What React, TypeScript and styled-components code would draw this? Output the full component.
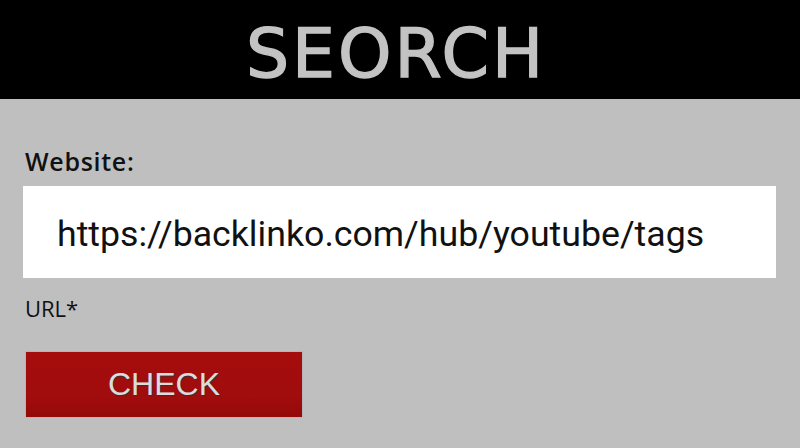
import React from "react";
import styled, { createGlobalStyle } from "styled-components";

const GlobalStyle = createGlobalStyle`
  html, body {
    margin: 0;
    padding: 0;
    background: #bfbfbf;
  }
`;

const Page = styled.div`
  width: 800px;
  height: 448px;
  overflow: hidden;
  background: #bfbfbf;
  display: flex;
  flex-direction: column;
`;

const Header = styled.header`
  height: 99px;
  box-sizing: border-box;
  padding-top: 9px;
  padding-right: 8px;
  background: #000;
  display: flex;
  align-items: center;
  justify-content: center;
`;

const Title = styled.h1`
  margin: 0;
  font-family: "DejaVu Sans", sans-serif;
  font-weight: normal;
  font-size: 68px;
  letter-spacing: 3px;
  color: #c3c3c3;
  -webkit-text-stroke: 1.4px #c3c3c3;
  line-height: 1;
`;

const Form = styled.div`
  display: flex;
  flex-direction: column;
  padding: 47px 24px 0 23px;
`;

const Label = styled.label`
  font-family: "Open Sans", sans-serif;
  font-weight: 600;
  font-size: 25px;
  letter-spacing: 0.7px;
  color: #111;
  padding-left: 2px;
  line-height: 30px;
`;

const Input = styled.div`
  margin-top: 10px;
  height: 92px;
  box-sizing: border-box;
  padding-top: 4px;
  background: #fff;
  display: flex;
  align-items: center;
  padding-left: 34px;
  font-family: Roboto, sans-serif;
  font-size: 35.7px;
  color: #111;
`;

const Hint = styled.div`
  margin-top: 15px;
  padding-left: 2px;
  font-family: "Open Sans", sans-serif;
  font-size: 22px;
  color: #111;
  line-height: 30px;
`;

const Button = styled.button`
  margin-top: 28px;
  margin-left: 2px;
  width: 278px;
  height: 67px;
  border: 1px solid #b5b5b5;
  background: linear-gradient(#a50d0d, #a10c0c 70%, #940909);
  font-family: "Liberation Sans", Arial, sans-serif;
  font-size: 32px;
  color: #dcdcdc;
  text-shadow: 1px 1px 1px #333;
  cursor: pointer;
  padding: 0;
`;

export default function App() {
  return (
    <Page>
      <GlobalStyle />
      <Header>
        <Title>SEORCH</Title>
      </Header>
      <Form>
        <Label>Website:</Label>
        <Input>https://backlinko.com/hub/youtube/tags</Input>
        <Hint>URL*</Hint>
        <Button>CHECK</Button>
      </Form>
    </Page>
  );
}
